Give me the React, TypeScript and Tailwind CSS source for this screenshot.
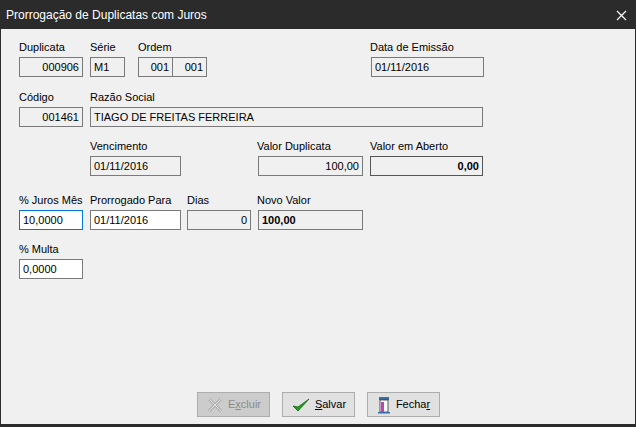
import React from "react";

const F = ({ c, children, right, bold, white, focus }: { c: string; children?: React.ReactNode; right?: boolean; bold?: boolean; white?: boolean; focus?: boolean }) => (
  <div className={`${c} h-[20px] flex items-center px-[3px] border ${focus ? "border-[#0078d7]" : "border-[#7a7a7a]"} ${white ? "bg-white" : "bg-[#f0f0f0]"} ${right ? "justify-end" : ""} ${bold ? "font-bold" : ""}`}>
    {children}
  </div>
);
const L = ({ c, children }: { c: string; children: React.ReactNode }) => <div className={`${c} h-[14px] leading-[14px]`}>{children}</div>;

export default function App() {
  return (
    <div className="w-[636px] h-[427px] bg-[#2b2b2b] p-[1px] text-[11px] text-black" style={{ fontFamily: '"Liberation Sans", Arial, sans-serif' }}>
      <div className="h-[28px] flex items-center justify-between pl-[5px] pr-[8px] text-white text-[12px]">
        <span>Prorrogação de Duplicatas com Juros</span>
        <svg width="11" height="11" viewBox="0 0 11 11"><path d="M1 1L10 10M10 1L1 10" stroke="white" strokeWidth="1.2" /></svg>
      </div>
      <div className="w-[634px] h-[395px] bg-[#f0f0f0] flex flex-col pl-[18px]">
        <div className="flex mt-[11px]">
          <L c="w-[71px]">Duplicata</L><L c="w-[48px]">Série</L><L c="w-[232px]">Ordem</L><L c="">Data de Emissão</L>
        </div>
        <div className="flex mt-[3px]">
          <F c="w-[64px]" right>000906</F>
          <F c="w-[35px] ml-[7px]">M1</F>
          <F c="w-[35px] ml-[13px]" right>001</F>
          <F c="w-[35px] ml-[-1px]" right>001</F>
          <F c="w-[113px] ml-[164px]">01/11/2016</F>
        </div>
        <div className="flex mt-[13px]">
          <L c="w-[71px]">Código</L><L c="">Razão Social</L>
        </div>
        <div className="flex mt-[3px]">
          <F c="w-[64px]" right>001461</F>
          <F c="w-[393px] ml-[7px]">TIAGO DE FREITAS FERREIRA</F>
        </div>
        <div className="flex mt-[12px] pl-[71px]">
          <L c="w-[167px]">Vencimento</L><L c="w-[113px]">Valor Duplicata</L><L c="">Valor em Aberto</L>
        </div>
        <div className="flex mt-[3px] pl-[71px]">
          <F c="w-[91px]">01/11/2016</F>
          <F c="w-[105px] ml-[77px]" right>100,00</F>
          <F c="w-[113px] ml-[7px] border-[#555]" right bold>0,00</F>
        </div>
        <div className="flex mt-[17px]">
          <L c="w-[71px]">% Juros Mês</L><L c="w-[97px]">Prorrogado Para</L><L c="w-[70px]">Dias</L><L c="">Novo Valor</L>
        </div>
        <div className="flex mt-[3px]">
          <F c="w-[64px]" white focus>10,0000</F>
          <F c="w-[91px] ml-[7px]" white>01/11/2016</F>
          <F c="w-[64px] ml-[6px]" right>0</F>
          <F c="w-[105px] ml-[7px]" bold>100,00</F>
        </div>
        <div className="flex mt-[12px]"><L c="">% Multa</L></div>
        <div className="flex mt-[3px]"><F c="w-[64px]" white>0,0000</F></div>
        <div className="flex-1" />
        <div className="flex gap-[12px] pl-[178px] mb-[7px]">
          <button className="w-[73px] h-[25px] border border-[#adadad] bg-[#cccccc] text-[#8a8a8a] flex items-center justify-center gap-[4px]">
            <svg width="18" height="16" viewBox="0 0 18 16"><path d="M3 2L15 14M15 2L3 14" stroke="#b0b0b0" strokeWidth="3" /><path d="M3 2L15 14M15 2L3 14" stroke="#e0e0e0" strokeWidth="1" /></svg>
            <span>E<u>x</u>cluir</span>
          </button>
          <button className="w-[73px] h-[25px] border border-[#adadad] bg-[#e1e1e1] flex items-center justify-center gap-[4px]">
            <svg width="20" height="16" viewBox="0 0 20 16"><path d="M2 9L7 14L18 2L7 10Z" fill="#1f9d1f" stroke="#0b6b0b" strokeWidth="0.8" /></svg>
            <span><u>S</u>alvar</span>
          </button>
          <button className="w-[73px] h-[25px] border border-[#adadad] bg-[#e1e1e1] flex items-center justify-center gap-[5px]">
            <svg width="14" height="18" viewBox="0 0 14 18"><rect x="2" y="1" width="10" height="3" fill="#3a6ea5" /><rect x="3" y="4" width="8" height="12" fill="#fff" stroke="#333" strokeWidth="0.8" /><rect x="4" y="6" width="3" height="10" fill="#c040c0" /><rect x="1" y="16" width="12" height="1.5" fill="#3a6ea5" /></svg>
            <span>Fecha<u>r</u></span>
          </button>
        </div>
      </div>
      <div className="h-[2px]" />
    </div>
  );
}
